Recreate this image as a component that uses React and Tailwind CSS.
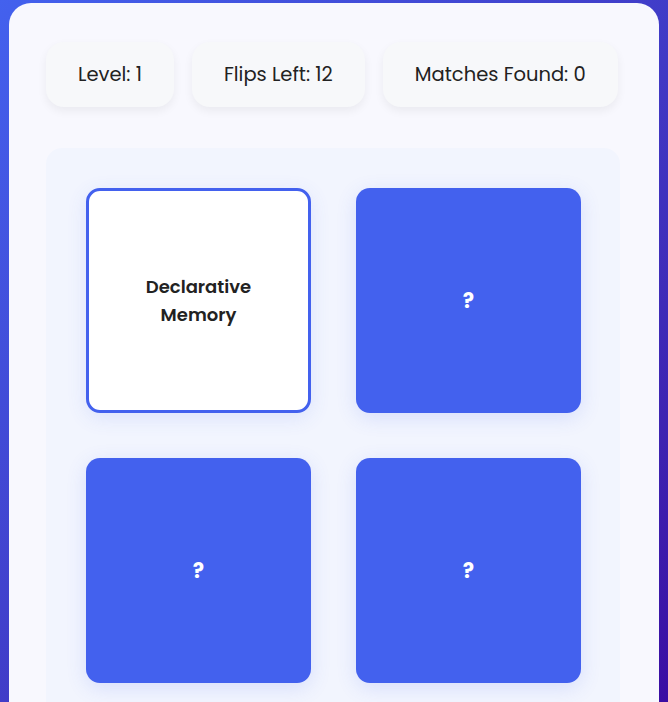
export default function App() {
  const stats = ["Level: 1", "Flips Left: 12", "Matches Found: 0"];
  const cards = [
    { flipped: true, text: "Declarative Memory" },
    { flipped: false },
    { flipped: false },
    { flipped: false },
  ];

  return (
    <div
      className="min-h-[702px] h-[702px] overflow-hidden bg-gradient-to-br from-[#4361ee] to-[#3a0ca3] px-[9px] pt-[3px]"
      style={{ fontFamily: '"Poppins", "Noto Sans", sans-serif' }}
    >
      <div className="h-[760px] rounded-[22px] bg-[#f8f8fe] pl-[37px] pr-[39px] pt-[39px]">
        {/* stats */}
        <div className="flex gap-[18px]">
          {stats.map((s) => (
            <div
              key={s}
              className="flex h-[65px] items-center justify-center rounded-[18px] bg-[#f7f8fa] px-8 text-[19.5px] text-[#222] shadow-[0_4px_10px_rgba(0,0,0,0.06)]"
            >
              {s}
            </div>
          ))}
        </div>

        {/* board */}
        <div className="mt-[41px] h-[620px] rounded-[16px] bg-[#f2f5fe] px-[40px] pt-[40px]">
          <div className="grid grid-cols-[225px_225px] gap-x-[45px] gap-y-[45px]">
            {cards.map((c, i) =>
              c.flipped ? (
                <div
                  key={i}
                  className="flex h-[225px] items-center justify-center rounded-[14px] border-[3px] border-[#4361ee] bg-white px-6 text-center text-[18px] font-semibold leading-[28px] text-[#222] shadow-[0_5px_20px_rgba(67,97,238,0.12)]"
                >
                  {c.text}
                </div>
              ) : (
                <div
                  key={i}
                  className="flex h-[225px] items-center justify-center rounded-[14px] bg-[#4361ee] text-[21px] font-bold text-white shadow-[0_5px_20px_rgba(67,97,238,0.15)]"
                >
                  ?
                </div>
              )
            )}
          </div>
        </div>
      </div>
    </div>
  );
}
